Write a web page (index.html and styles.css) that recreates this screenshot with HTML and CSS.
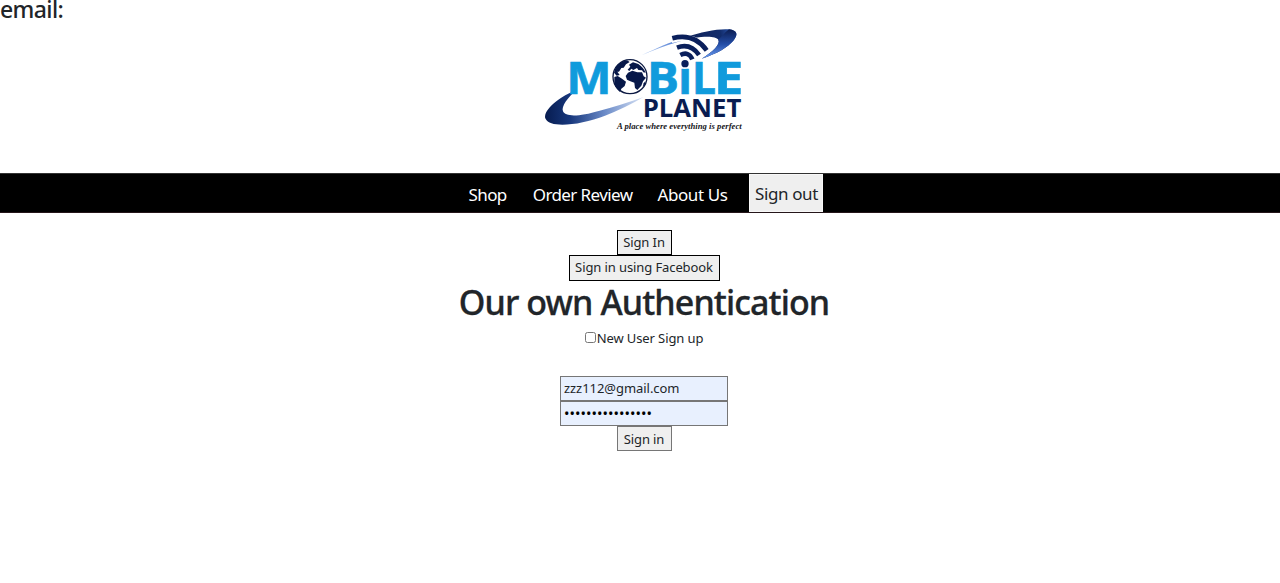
FILE: index.html
```html
<!DOCTYPE html>
<html lang="en">
<head>
<meta charset="utf-8">
<title>Mobile Planet</title>
<link rel="stylesheet" href="styles.css">
</head>
<body>
<h3 class="email">email:</h3>
<header class="brand">
<svg class="logo" viewBox="0 0 660 360" role="img" aria-label="Mobile Planet">
<defs>
<linearGradient id="top" x1="320" y1="100" x2="600" y2="40" gradientUnits="userSpaceOnUse"><stop offset="0" stop-color="#b9d0f5"/><stop offset=".35" stop-color="#5c86d6"/><stop offset=".55" stop-color="#10245c"/><stop offset=".85" stop-color="#122c6b"/><stop offset="1" stop-color="#2f5cb8"/></linearGradient>
<linearGradient id="low" x1="30" y1="0" x2="330" y2="0" gradientUnits="userSpaceOnUse"><stop offset="0" stop-color="#071c50"/><stop offset=".25" stop-color="#17377c"/><stop offset=".6" stop-color="#6b8bc8"/><stop offset="1" stop-color="#dce6f7"/></linearGradient>
<linearGradient id="rim" x1="0" y1="30" x2="0" y2="115" gradientUnits="userSpaceOnUse"><stop offset="0" stop-color="#0d1f55"/><stop offset=".5" stop-color="#234da7"/><stop offset="1" stop-color="#6c9cf0"/></linearGradient>
</defs>
<path fill="url(#top)" d="M320 106C405 63 520 23 582 28C608 31 610 45 595 62C579 81 548 100 500 116C535 94 557 72 550 59C540 43 480 50 430 65Q370 83 320 106Z"/>
<path fill="url(#rim)" d="M582 28C608 31 610 45 595 62C579 81 548 100 500 116C535 94 557 72 550 59C558 52 568 39 582 28Z"/>
<path fill="url(#low)" d="M124 209C60 237 22 276 32 297C45 325 135 316 210 287Q270 264 326 231Q250 258 194 272C130 291 91 290 84 274C78 258 99 233 124 209Z"/>
<g fill="none" stroke="#fff" stroke-width="20"><path d="M409 59Q480 40 515 93"/><path d="M424 88Q468 68 499 108"/><path d="M438 109Q465 94 476 119"/></g>
<g fill="none" stroke="#0a1f5b" stroke-width="14"><path d="M412 55Q477 38 515 91"/><path d="M426 83Q466 68 492 105"/><path d="M436 105Q461 93 472 118"/></g>
<g class="word"><text x="94" y="221" textLength="136" lengthAdjust="spacingAndGlyphs">M</text><text x="336" y="221" textLength="96" lengthAdjust="spacingAndGlyphs">B</text><text x="430" y="221" textLength="41" lengthAdjust="spacingAndGlyphs">ı</text><text x="471" y="221" textLength="72" lengthAdjust="spacingAndGlyphs">L</text><text x="537" y="221" textLength="88" lengthAdjust="spacingAndGlyphs">E</text></g>
<circle cx="449" cy="131" r="15" fill="#fff"/><circle cx="450" cy="131" r="11" fill="#0a1f5b"/>
<circle cx="285" cy="170" r="57" fill="#fff"/><circle cx="285" cy="170" r="51" fill="#fff" stroke="#0c1942" stroke-width="4"/>
<g fill="#071849"><path d="M242 141Q255 124 276 121L284 126L273 133L266 143L259 144L252 155L247 155L254 165L245 167L237 158Z"/><path d="M238 171L248 168L261 176L273 185L269 198L259 206L255 216Q240 204 238 190Z"/><path d="M278 149L286 140L282 134L294 127L310 132Q326 143 332 158L325 157L321 151L310 150L306 144L295 150L289 146L283 153Z"/><path d="M279 158L292 152L307 157L321 157L326 169L333 173L324 184L319 197L307 210L300 204L298 188L286 184L276 179L272 168Z"/><path d="M326 190L331 184L330 194L323 200Z"/></g>
<text class="planet" x="323" y="292" textLength="296" lengthAdjust="spacingAndGlyphs">PLANET</text>
<text class="tagline" x="246" y="326" textLength="374" lengthAdjust="spacingAndGlyphs">A place where everything is perfect</text>
</svg>
</header>
<nav class="nav"><a>Shop</a><a class="review">Order Review</a><a class="about">About Us</a><button class="signout">Sign out</button></nav>
<main class="auth">
<button class="btn strong">Sign In</button>
<button class="btn strong facebook">Sign in using Facebook</button>
<h1>Our own Authentication</h1>
<label class="new-user"><input type="checkbox">New User Sign up</label>
<form class="form">
<input class="field" type="text" value="zzz112@gmail.com">
<input class="field password" type="text" value="••••••••••••••••">
<button class="btn" type="button">Sign in</button>
</form>
</main>
</body>
</html>
```
FILE: styles.css
```css
* { box-sizing: border-box; }
body { margin: 0; background: #fff; color: #212529; font-family: "Noto Sans", sans-serif; overflow: hidden; }
button, input { font-family: inherit; margin: 0; }
.email { margin: 0; height: 20px; font-size: 23px; font-weight: 550; line-height: 18px; letter-spacing: -.6px; }
.brand { height: 153px; padding-left: 10px; display: flex; justify-content: center; }
.logo { width: 220px; height: 120px; }
.word { font: bold 134px "Open Sans", sans-serif; fill: #109bdc; stroke: #109bdc; stroke-width: 2px; }
.planet { font: bold 76px "Open Sans", sans-serif; fill: #0a1d51; }
.tagline { font: italic bold 25px "Liberation Serif", serif; fill: #17171b; }
.nav { height: 40px; background: #000; border-top: 1px solid #333; border-bottom: 1px solid #25161a; display: flex; justify-content: center; padding-left: 12px; color: #fff; font-size: 17px; line-height: 41px; }
.nav a { margin-right: 26px; letter-spacing: -.6px; white-space: nowrap; }
.nav .review { margin-right: 25px; }
.nav .about { margin-right: 22px; letter-spacing: -.4px; }
.signout { width: 74px; height: 38px; padding: 0; border: 1px solid #f8f8f8; background: #efefef; color: #212529; font-size: 17px; letter-spacing: -.4px; white-space: nowrap; }
.auth { padding: 17px 0 0 8px; display: flex; flex-direction: column; align-items: center; }
.btn { width: 55px; height: 25px; padding: 0; border: 1px solid #767676; background: #efefef; color: #212529; font-size: 13px; letter-spacing: -.1px; white-space: nowrap; }
.strong { border-color: #000; height: 26px; padding-bottom: 2px; }
.strong:first-child { height: 25px; }
.facebook { width: 151px; }
h1 { margin: 0; height: 46px; font-size: 34px; font-weight: 500; line-height: 43px; letter-spacing: -.9px; white-space: nowrap; -webkit-text-stroke: .3px #212529; }
.new-user { display: flex; align-items: center; height: 22px; font-size: 13px; letter-spacing: -.1px; }
.new-user input { width: 11px; height: 11px; margin: 0 1px 2px 0; }
.form { margin-top: 27px; display: flex; flex-direction: column; align-items: center; }
.field { width: 168px; height: 25px; border: 1px solid #767676; border-radius: 0; padding: 0 3px 2px; background: #e8f0fe; color: #212529; font-size: 13px; letter-spacing: -.05px; }
.password { padding-bottom: 1px; letter-spacing: .05px; font-size: 14.5px; color: #000; }
```
